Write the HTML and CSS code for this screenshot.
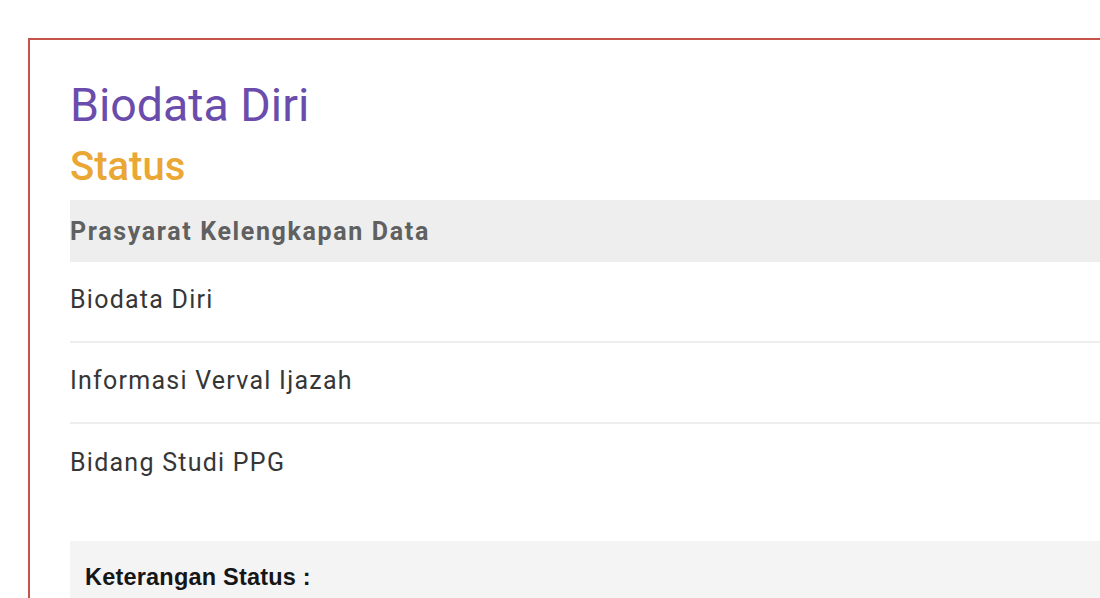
FILE: index.html
```html
<!DOCTYPE html>
<html>
<head>
<meta charset="utf-8">
<link rel="stylesheet" href="styles.css">
</head>
<body>
<div class="frame">
  <h1 class="title">Biodata Diri</h1>
  <h2 class="status">Status</h2>
  <div class="table">
    <div class="thead">Prasyarat Kelengkapan Data</div>
    <div class="row">Biodata Diri</div>
    <div class="row">Informasi Verval Ijazah</div>
    <div class="row">Bidang Studi PPG</div>
  </div>
  <div class="note">
    <div class="note-title">Keterangan Status :</div>
  </div>
</div>
</body>
</html>
```
FILE: styles.css
```css
html, body {
  margin: 0;
  padding: 0;
  background: #ffffff;
  overflow: hidden;
  height: 598px;
}
.frame {
  margin: 38px 0 0 28px;
  border-top: 2px solid #c4544a;
  border-left: 2px solid #c4544a;
  padding: 38px 0 0 40px;
  height: 700px;
  font-family: Roboto, "Noto Sans", sans-serif;
}
.title {
  margin: 0;
  font-size: 46.5px;
  font-weight: 400;
  line-height: 54px;
  color: #6a4cad;
}
.status {
  margin: 11px 0 0;
  font-size: 40px;
  font-weight: 500;
  line-height: 48px;
  color: #eaa733;
}
.table {
  margin-top: 9px;
}
.thead {
  background: #eeeeee;
  height: 62px;
  display: flex;
  align-items: center;
  font-size: 25px;
  font-weight: 700;
  letter-spacing: 1.65px;
  color: #606060;
}
.row {
  box-sizing: border-box;
  height: 81px;
  padding-bottom: 5px;
  display: flex;
  align-items: center;
  font-size: 25px;
  letter-spacing: 1.25px;
  color: #363636;
  border-bottom: 2px solid #eeeeee;
}
.row:last-child {
  border-bottom: none;
}
.note {
  margin-top: 36px;
  background: #f4f4f5;
  padding: 22px 15px;
  height: 200px;
}
.note-title {
  font-family: "Liberation Sans", Arial, sans-serif;
  font-weight: 700;
  font-size: 23.5px;
  line-height: 28px;
  letter-spacing: 0.2px;
  color: #161616;
}
```
